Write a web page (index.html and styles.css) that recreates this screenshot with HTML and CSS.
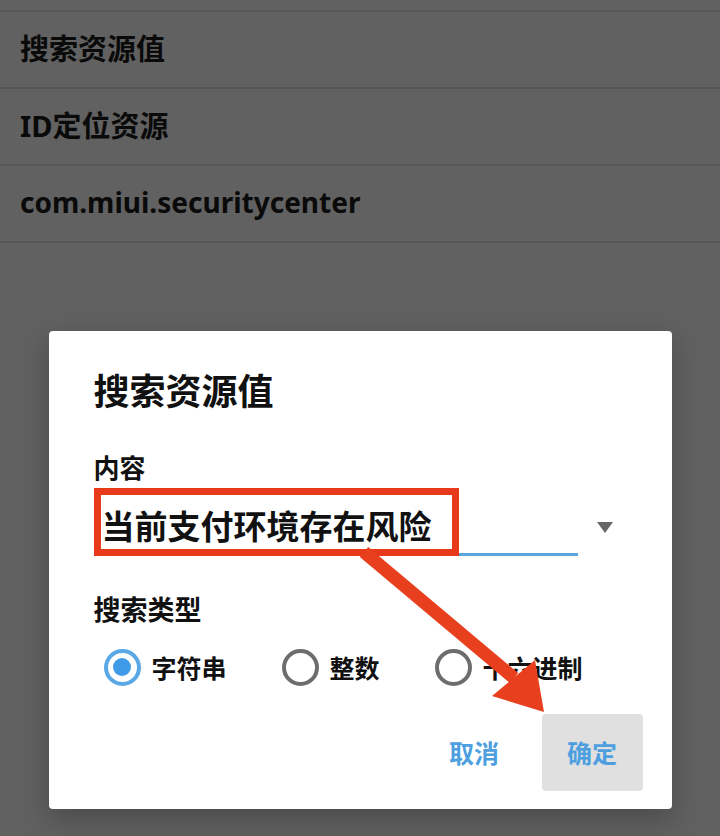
FILE: index.html
```html
<!DOCTYPE html>
<html lang="zh-CN">
<head>
<meta charset="utf-8">
<title>搜索资源值</title>
<link rel="stylesheet" href="styles.css">
</head>
<body>
<div class="list">
  <div class="row">搜索资源值</div>
  <div class="row">ID定位资源</div>
  <div class="row latin">com.miui.securitycenter</div>
</div>

<div class="overlay">
  <div class="dialog">
    <div class="title">搜索资源值</div>
    <div class="label">内容</div>
    <div class="field-row">
      <div class="input">当前支付环境存在风险<span class="mark-box"></span></div>
      <span class="caret"></span>
    </div>
    <div class="label type-label">搜索类型</div>
    <div class="radios">
      <div class="radio-item"><span class="radio checked"></span><span class="radio-text">字符串</span></div>
      <div class="radio-item"><span class="radio"></span><span class="radio-text">整数</span></div>
      <div class="radio-item"><span class="radio"></span><span class="radio-text">十六进制</span></div>
    </div>
    <div class="actions">
      <div class="btn">取消</div>
      <div class="btn pressed">确定</div>
    </div>
  </div>
</div>

<svg class="arrow" width="720" height="836" viewBox="0 0 720 836">
  <line x1="364" y1="552" x2="514" y2="678" stroke="#e8401e" stroke-width="13"/>
  <polygon points="544,712 492,696 535,660" fill="#e8401e"/>
</svg>
</body>
</html>
```
FILE: styles.css
```css
* { box-sizing: border-box; }
html, body { margin: 0; padding: 0; }
body {
  width: 720px;
  height: 836px;
  background: #616161;
  font-family: "Noto Sans", "Noto Sans CJK SC", sans-serif;
  color: #0a0a0a;
  overflow: hidden;
  position: relative;
}
.list { margin-top: 10px; }
.row {
  height: 77px;
  border-top: 2px solid #565656;
  padding-left: 20px;
  font-size: 29px;
  font-weight: 700;
  line-height: 73px;
}
.row:last-child { border-bottom: 2px solid #565656; height: 79px; }
.row.latin { font-size: 28px; letter-spacing: 0; }

.overlay {
  position: absolute;
  inset: 0;
  padding-top: 331px;
}
.dialog {
  width: 623px;
  height: 478px;
  margin: 0 auto;
  background: #ffffff;
  border-radius: 4px;
  box-shadow: 0 10px 30px rgba(0,0,0,0.25);
  padding: 40px 29px 18px 45px;
  font-family: "Noto Sans CJK SC", sans-serif;
  color: #111;
}
.title {
  font-size: 36px;
  line-height: 36px;
  font-weight: 700;
}
.label {
  margin-top: 47px;
  font-size: 26px;
  line-height: 26px;
  font-weight: 700;
}
.field-row {
  display: flex;
  align-items: flex-start;
}
.input {
  position: relative;
  width: 484px;
  padding: 29px 0 11px 8px;
  font-size: 33px;
  line-height: 33px;
  font-weight: 700;
  border-bottom: 3px solid #5aa5de;
}
.mark-box {
  position: absolute;
  left: 0;
  top: 8px;
  width: 365px;
  height: 68px;
  border: 7px solid #e8391b;
}
.caret {
  margin-left: 19px;
  margin-top: 42px;
  width: 0;
  height: 0;
  border-left: 8.5px solid transparent;
  border-right: 8.5px solid transparent;
  border-top: 11px solid #666;
}
.type-label {
  margin-top: 39px;
  font-size: 27px;
  line-height: 27px;
}
.radios {
  margin-top: 26px;
  display: flex;
  gap: 55px;
  padding-left: 10px;
  height: 38px;
}
.radio-item {
  display: flex;
  align-items: center;
  gap: 11px;
}
.radio {
  width: 37px;
  height: 37px;
  border-radius: 50%;
  border: 4px solid #6d6d6d;
  display: flex;
  align-items: center;
  justify-content: center;
}
.radio.checked { border-color: #5aa8e6; }
.radio.checked::after {
  content: "";
  width: 18px;
  height: 18px;
  border-radius: 50%;
  background: #3f9be8;
}
.radio-text {
  font-size: 25px;
  line-height: 38px;
  font-weight: 700;
}
.actions {
  margin-top: 28px;
  display: flex;
  justify-content: flex-end;
  gap: 17px;
}
.btn {
  width: 101px;
  height: 77px;
  border-radius: 4px;
  text-align: center;
  line-height: 77px;
  font-size: 25px;
  font-weight: 700;
  color: #4d9fe0;
}
.btn.pressed { background: #e0e0e0; }
.arrow {
  position: absolute;
  left: 0;
  top: 0;
  pointer-events: none;
}
```
